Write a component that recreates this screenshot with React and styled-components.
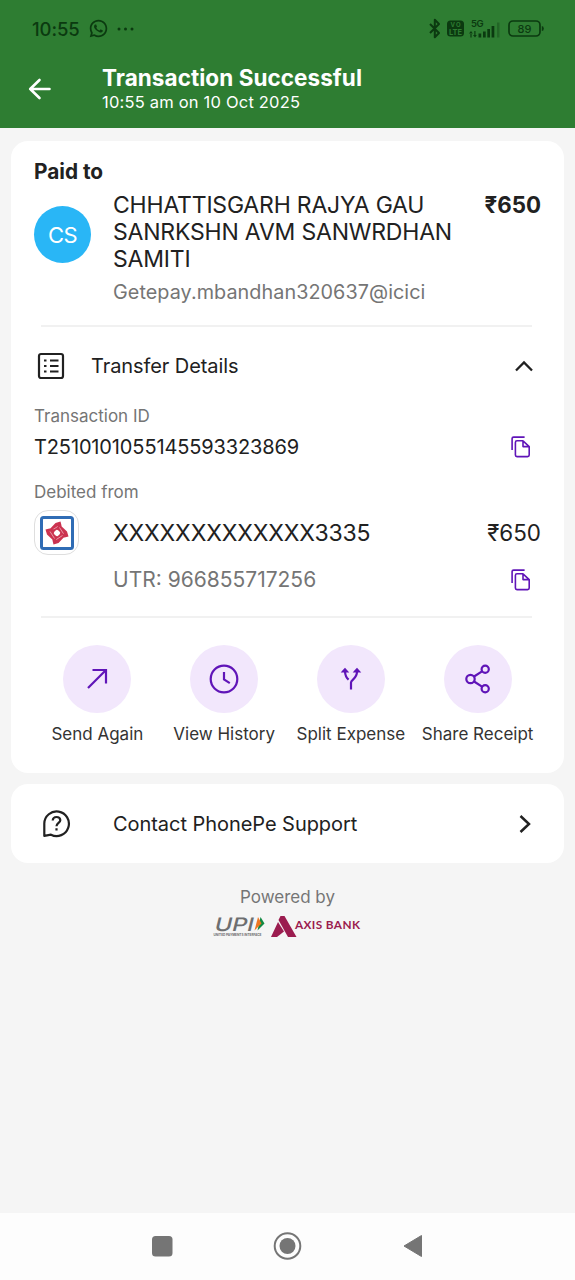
import React from 'react';
import styled, { createGlobalStyle } from 'styled-components';
import { RiWhatsappLine } from 'react-icons/ri';

const ink = '#212121';
const muted = '#757575';
const purple = '#6015b8';
const statusInk = '#0b3a10';

const GlobalStyle = createGlobalStyle`
  * {
    box-sizing: border-box;
  }
  body {
    margin: 0;
    background: #f5f5f5;
    font-family: Inter, 'Noto Sans', sans-serif;
    color: ${ink};
  }
`;

const Screen = styled.div`
  display: flex;
  flex-direction: column;
  width: 575px;
  height: 1280px;
  overflow: hidden;
  background: #f5f5f5;
`;

const Header = styled.header`
  height: 128px;
  background: #2e7d32;
`;

const StatusBar = styled.div`
  display: flex;
  align-items: center;
  justify-content: space-between;
  height: 57px;
  padding: 0 30px 0 32px;
  color: ${statusInk};
`;

const StatusGroup = styled.div`
  display: flex;
  align-items: center;
  gap: 8px;
`;

const TitleBar = styled.div`
  display: flex;
  padding-left: 28px;
`;

const BackIcon = styled.svg`
  width: 23px;
  height: 24px;
  margin: 20px 51px 0 0;
`;

const Titles = styled.div`
  padding-top: 8px;
`;

const Text = styled.div`
  flex: ${props => (props.$grow ? 1 : 'none')};
  font-size: ${props => props.$size}px;
  line-height: ${props => props.$line || 26}px;
  font-weight: ${props => props.$weight || 400};
  letter-spacing: ${props => props.$spacing || 0}px;
  color: ${props => props.$color || 'inherit'};
  white-space: nowrap;
`;

const Card = styled.section`
  margin: 0 11px;
  padding: 0 23px;
  border-radius: 17px;
  background: #fff;
`;

const Receipt = styled(Card)`
  height: 632px;
  margin-top: 12.5px;
  padding-top: 16px;
`;

const Payee = styled.div`
  display: flex;
  align-items: flex-start;
  height: 119px;
  margin-top: 6px;
`;

const Avatar = styled.div`
  display: grid;
  place-items: center;
  width: 57px;
  height: 57px;
  margin: 14.5px 22px 0 0;
  border-radius: 50%;
  background: #29b6f6;
  color: #fff;
`;

const PayeeInfo = styled.div`
  flex: 1;
`;

const Vpa = styled(Text)`
  margin-top: 5px;
`;

const Divider = styled.hr`
  height: 2px;
  margin: ${props => props.$top}px 9px 0 7px;
  border: 0;
  background: #f1f1f1;
`;

const Row = styled.div`
  display: flex;
  align-items: center;
  height: ${props => props.$height}px;
  padding-right: ${props => props.$right || 0}px;
  padding-left: ${props => props.$indent || 0}px;
`;

const SectionIcon = styled.svg`
  width: 28px;
  height: 28px;
  margin: -1px 26.5px 0 2.5px;
`;

const BankBadge = styled.div`
  display: grid;
  place-items: center;
  width: 45px;
  height: 45px;
  margin-right: 34px;
  border: 1px solid #dedede;
  border-radius: 14px;
`;

const Actions = styled.div`
  display: grid;
  grid-template-columns: repeat(4, 1fr);
  margin-top: 26.5px;
`;

const Action = styled.div`
  display: flex;
  flex-direction: column;
  align-items: center;
  gap: 8.5px;
`;

const ActionCircle = styled.div`
  display: grid;
  place-items: center;
  width: 68px;
  height: 68px;
  border-radius: 50%;
  background: #f2e7fc;
`;

const Support = styled(Card)`
  display: flex;
  align-items: center;
  height: 79px;
  margin-top: 11.5px;
  padding-right: 33px;
`;

const HelpIcon = styled.svg`
  width: 29px;
  height: 29px;
  margin: 0 42px 0 8px;
`;

const Powered = styled.footer`
  display: flex;
  flex: 1;
  flex-direction: column;
  align-items: center;
  gap: 3px;
  padding-top: 20.5px;
`;

const NavBar = styled.nav`
  display: flex;
  align-items: center;
  justify-content: space-between;
  height: 67px;
  padding: 0 152px 0 151px;
  background: #fdfdfd;

  svg {
    margin-top: -1px;
  }
`;

const CopyIcon = () => (
  <svg width="20" height="22" viewBox="0 0 20 22" fill="none" stroke={purple} strokeWidth="1.6">
    <path d="M1.1 14V2.6q0-1.5 1.5-1.5H13.6" />
    <path d="M12 4.8H6q-1.6 0-1.6 1.6v12.6q0 1.6 1.6 1.6h10.600q1.6 0 1.6-1.6V10.600L12 4.800V10.600h6" strokeLinejoin="round" />
  </svg>
);

const StatusIcons = () => (
  <svg width="117" height="24" viewBox="0 0 117 24" fill={statusInk}>
    <path
      d="M2 7 11 16 6.800 20.200V2.800L11 7 2 16"
      fill="none"
      stroke={statusInk}
      strokeWidth="2"
      strokeLinejoin="round"
    />
    <rect x="19" y="3.500" width="17" height="16" rx="3.500" />
    <g fontFamily="Inter, sans-serif" fontWeight="700">
      <text x="22.500" y="10.300" fontSize="6" fill="#2e7d32" textLength="10">VO</text>
      <text x="21" y="17.500" fontSize="7.500" fill="#2e7d32" textLength="13" lengthAdjust="spacingAndGlyphs">LTE</text>
      <text x="43" y="9.800" fontSize="9.500" textLength="12.500" fontWeight="600">5G</text>
      <text x="89.500" y="15.800" fontSize="11" fontWeight="500" textLength="14">89</text>
    </g>
    <path d="M41 16.500h3.800L43 14zM42.400 16h1.200v4.500h-1.200zM45 18h3.800L47 20.500zM46.300 14h1.200v5h-1.200z" />
    <path d="M50.500 16.500h2.700v4h-2.700zM55 14.500h2.700v6H55zM59.300 12h2.700v8.500h-2.700zM63.600 9h2.700V20.500h-2.700z" />
    <path d="M69 5.500h2.500v15H69z" opacity="0.350" />
    <rect x="81" y="4" width="31" height="15" rx="4" fill="none" stroke={statusInk} strokeWidth="1.700" />
    <path d="M113.800 9q2 0 2 2.500t-2 2.500z" />
  </svg>
);

const icons = {
  send: <path d="M6 24 24 6M10.500 6H24v13.500" />,
  history: (
    <>
      <circle cx="15" cy="15" r="13.300" />
      <path d="M15 8v7.500l5.800 3.600" />
    </>
  ),
  split: (
    <>
      <path d="M15 25.500V18.500c0-3 6-3.500 6-11M12.600 15.700C10.600 14 9.200 11.500 9 7.500" />
      <path d="M7.200 7.300 9 5.300l1.800 2zM19.200 7.300 21 5.300l1.800 2z" fill={purple} />
    </>
  ),
  share: (
    <>
      <circle cx="7.500" cy="15" r="4.200" />
      <circle cx="22.200" cy="5.200" r="3.600" />
      <circle cx="22.200" cy="24.800" r="3.600" />
      <path d="m11.100 12.500 7.900-5.200M11.100 17.500l7.900 5.200" />
    </>
  ),
};

const actions = [
  { icon: 'send', label: 'Send Again' },
  { icon: 'history', label: 'View History' },
  { icon: 'split', label: 'Split Expense' },
  { icon: 'share', label: 'Share Receipt' },
];

const BankLogo = () => (
  <svg width="34" height="34" viewBox="0 0 34 34">
    <rect x="1.500" y="1.500" width="31" height="31" rx="2" fill="#fff" stroke="#2f6cb5" strokeWidth="3" />
    {[0, 90, 180, 270].map(angle => (
      <g key={angle} transform={`rotate(${angle} 17 17)`}>
        <path d="M15.500 7 20.500 5.500 21.500 9.500 20.500 14.500 17 13.500 13.500 17 7.500 15.500z" fill="#cb3350" />
        <path d="m11.500 14.500 7-4.500" stroke="#e896a5" />
      </g>
    ))}
    <circle cx="17" cy="17" r="2.700" fill="#fff" />
  </svg>
);

const PartnerLogos = () => (
  <svg width="150" height="26" viewBox="0 0 150 26">
    <g fill="#6d6e70">
      <text
        transform="translate(0.500 17.500) skewX(-14)"
        fontFamily="Inter, sans-serif"
        fontSize="18.500"
        fontWeight="500"
        textLength="39"
        lengthAdjust="spacingAndGlyphs"
      >
        UPI
      </text>
      <text x="0.500" y="22.700" fontFamily="Inter, sans-serif" fontSize="3.400" fontWeight="700" textLength="48" lengthAdjust="spacingAndGlyphs">
        UNITED PAYMENTS INTERFACE
      </text>
    </g>
    <path d="M47.500 4 51.500 10.500 44.500 17.500z" fill="#118a43" />
    <path d="M45 4 48.500 10.500l-7 7z" fill="#ee7623" />
    <g fill="#9b1c4f">
      <path d="M67.500 3H71.500L83.500 24h-8.500L65.500 7z" />
      <path d="m65 9 6 9.500L64 24h-6z" />
      <text x="82" y="15.800" fontFamily="Lato, sans-serif" fontSize="11.800" fontWeight="700" textLength="65">
        AXIS BANK
      </text>
    </g>
  </svg>
);

export default function App() {
  return (
    <Screen>
      <GlobalStyle />
      <Header>
        <StatusBar>
          <StatusGroup>
            <Text $size={18.5} $weight={500} $spacing={-0.1}>10:55</Text>
            <RiWhatsappLine size={21} />
            <svg width="17" height="4" viewBox="0 0 17 4" fill={statusInk}>
              <circle cx="2" cy="2" r="1.500" />
              <circle cx="8.500" cy="2" r="1.500" />
              <circle cx="15" cy="2" r="1.500" />
            </svg>
          </StatusGroup>
          <StatusIcons />
        </StatusBar>
        <TitleBar>
          <BackIcon viewBox="0 0 23 24" fill="none" stroke="#fff" strokeWidth="2.600" strokeLinecap="round" strokeLinejoin="round">
            <path d="M11.500 3 2.200 12l9.300 9M2.200 12h19.300" />
          </BackIcon>
          <Titles>
            <Text $size={22.5} $weight={700} $spacing={0.05} $color="#fff">Transaction Successful</Text>
            <Text $size={16.5} $spacing={0.2} $line={23} $color="#fff">10:55 am on 10 Oct 2025</Text>
          </Titles>
        </TitleBar>
      </Header>

      <Receipt>
        <Text $size={20.8} $line={29} $weight={700}>Paid to</Text>
        <Payee>
          <Avatar>
            <Text $size={22} $spacing={-0.5}>CS</Text>
          </Avatar>
          <PayeeInfo>
            <Text $size={23} $spacing={-0.2} $line={27.4}>
              CHHATTISGARH RAJYA GAU
              <br />
              SANRKSHN AVM SANWRDHAN
              <br />
              SAMITI
            </Text>
            <Vpa $size={19.8} $spacing={0.06} $color={muted}>Getepay.mbandhan320637@icici</Vpa>
          </PayeeInfo>
          <Text $size={22.3} $line={26.4} $weight={700}>₹650</Text>
        </Payee>
        <Divider $top={14.5} />

        <Row $height={78} $right={8}>
          <SectionIcon viewBox="0 0 28 28" fill="none" stroke={ink} strokeWidth="2.200">
            <rect x="2" y="2" width="24" height="24" rx="2" />
            <path d="M7 8.500h2.500M7 14h2.500M7 19.500h2.500M13 8.500h8.500M13 14h8.500M13 19.500h8.500" />
          </SectionIcon>
          <Text $size={20} $spacing={-0.08} $grow>Transfer Details</Text>
          <svg width="18" height="12" viewBox="0 0 18 12" fill="none" stroke={ink} strokeWidth="2.300">
            <path d="m1 10.500 8-8 8 8" />
          </svg>
        </Row>

        <Row $height={21}>
          <Text $size={17} $color={muted}>Transaction ID</Text>
        </Row>
        <Row $height={41} $right={10}>
          <Text $size={20} $spacing={-0.13} $grow>T2510101055145593323869</Text>
          <CopyIcon />
        </Row>
        <Row $height={49}>
          <Text $size={17} $color={muted}>Debited from</Text>
        </Row>
        <Row $height={33}>
          <BankBadge>
            <BankLogo />
          </BankBadge>
          <Text $size={23} $spacing={-0.16} $grow>XXXXXXXXXXXXX3335</Text>
          <Text $size={22.4}>₹650</Text>
        </Row>
        <Row $height={62} $indent={79} $right={10}>
          <Text $size={21} $color={muted} $grow>UTR: 966855717256</Text>
          <CopyIcon />
        </Row>
        <Divider $top={5} />

        <Actions>
          {actions.map(({ icon, label }) => (
            <Action key={icon}>
              <ActionCircle>
                <svg width="30" height="30" viewBox="0 0 30 30" fill="none" stroke={purple} strokeWidth="2.200">
                  {icons[icon]}
                </svg>
              </ActionCircle>
              <Text $size={17} $color="#333">{label}</Text>
            </Action>
          ))}
        </Actions>
      </Receipt>

      <Support>
        <HelpIcon viewBox="0 0 29 29" fill="none" stroke={ink} strokeWidth="2.200">
          <path d="M2.300 26.800V14.500A12.300 12.300 0 1 1 9 25.700z" strokeLinejoin="round" />
          <path d="M10.700 11.500q.3-3.500 3.800-3.500t3.800 3.200c0 2.600-3.800 2.800-3.800 6M14.500 19.200v2.300" />
        </HelpIcon>
        <Text $size={20} $spacing={-0.05} $grow>Contact PhonePe Support</Text>
        <svg width="12" height="18" viewBox="0 0 12 18" fill="none" stroke={ink} strokeWidth="2.500">
          <path d="m1.500 1 8.500 8-8.500 8" />
        </svg>
      </Support>

      <Powered>
        <Text $size={17} $color={muted}>Powered by</Text>
        <PartnerLogos />
      </Powered>

      <NavBar>
        <svg width="22" height="22" viewBox="0 0 22 22" fill="#757575">
          <rect x="1" y="1" width="20.500" height="20.500" rx="3.500" />
        </svg>
        <svg width="30" height="28" viewBox="0 0 30 28" fill="#757575">
          <circle cx="14.500" cy="14" r="12.800" fill="none" stroke="#757575" strokeWidth="2" />
          <circle cx="14.500" cy="14" r="8" />
        </svg>
        <svg width="20" height="24" viewBox="0 0 20 24" fill="#757575">
          <path d="M18.500 1.500v21L1 12z" stroke="#757575" strokeLinejoin="round" />
        </svg>
      </NavBar>
    </Screen>
  );
}
